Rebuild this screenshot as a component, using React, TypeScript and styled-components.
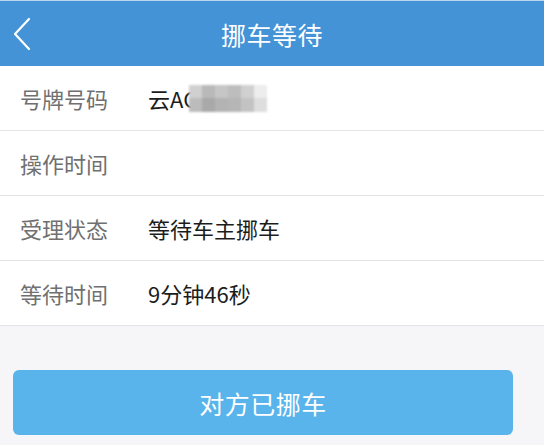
import React from "react";
import styled, { createGlobalStyle } from "styled-components";

const GlobalStyle = createGlobalStyle`
  html, body {
    margin: 0;
    padding: 0;
    background: #f6f6f8;
    font-family: "Noto Sans CJK SC", "Liberation Sans", sans-serif;
  }
`;

const Page = styled.div`
  width: 544px;
  height: 445px;
  overflow: hidden;
  background: #f6f6f8;
`;

const Header = styled.div`
  height: 66px;
  background: #4393d6;
  display: flex;
  align-items: center;
  justify-content: center;
  position: relative;
  border-top: 1px solid #b9d6ee;
  box-sizing: border-box;
`;

const BackButton = styled.div`
  position: absolute;
  left: 12px;
  top: 15px;
  width: 22px;
  height: 36px;
  display: flex;
  align-items: center;
`;

const Title = styled.div`
  color: #fff;
  font-size: 25px;
  letter-spacing: 0.5px;
`;

const List = styled.div`
  background: #fff;
  border-bottom: 1px solid #e4e4e8;
`;

const Row = styled.div`
  height: 64px;
  display: flex;
  align-items: center;
  padding-left: 20px;
  & + & {
    border-top: 1px solid #e4e4e8;
  }
`;

const Label = styled.div`
  width: 128px;
  font-size: 22px;
  color: #707070;
`;

const Value = styled.div`
  font-size: 22px;
  color: #1c1c1c;
  display: flex;
  align-items: center;
`;

const Plate = styled.span`
  position: relative;
  display: inline-flex;
  align-items: center;
`;

// 번호판 가림 처리 (모자이크)
const Mosaic = styled.div`
  display: grid;
  grid-template-columns: repeat(6, 13px);
  grid-template-rows: repeat(2, 13.5px);
  margin-left: -8px;
  filter: blur(1.2px);
`;

const Tile = styled.div<{ $shade: string }>`
  background: ${({ $shade }) => $shade};
`;

const Footer = styled.div`
  padding: 44px 31px 0 13px;
`;

const ActionButton = styled.button`
  width: 100%;
  height: 65px;
  border: none;
  border-radius: 6px;
  background: #58b4eb;
  color: #fff;
  font-family: inherit;
  font-size: 25px;
  letter-spacing: 0.5px;
  cursor: pointer;
`;

const shades = [
  "#d0d0d0", "#b9b9b9", "#c6c6c6", "#bdbdbd", "#d0d0d0", "#ededed",
  "#bcbcbc", "#a9a9a9", "#b3b3b3", "#b6b6b6", "#c3c3c3", "#dedede",
];

const rows: { label: string; value?: React.ReactNode }[] = [
  {
    label: "号牌号码",
    value: (
      <Plate>
        云AC
        <Mosaic>
          {shades.map((s, i) => (
            <Tile key={i} $shade={s} />
          ))}
        </Mosaic>
      </Plate>
    ),
  },
  { label: "操作时间" },
  { label: "受理状态", value: "等待车主挪车" },
  { label: "等待时间", value: "9分钟46秒" },
];

export default function App() {
  return (
    <Page>
      <GlobalStyle />
      <Header>
        <BackButton>
          <svg width="20" height="34" viewBox="0 0 20 34">
            <path d="M17 2 L3 17 L17 32" fill="none" stroke="#fff" strokeWidth="2.2" strokeLinecap="round" strokeLinejoin="round" />
          </svg>
        </BackButton>
        <Title>挪车等待</Title>
      </Header>
      <List>
        {rows.map((r) => (
          <Row key={r.label}>
            <Label>{r.label}</Label>
            {r.value && <Value>{r.value}</Value>}
          </Row>
        ))}
      </List>
      <Footer>
        <ActionButton>对方已挪车</ActionButton>
      </Footer>
    </Page>
  );
}
